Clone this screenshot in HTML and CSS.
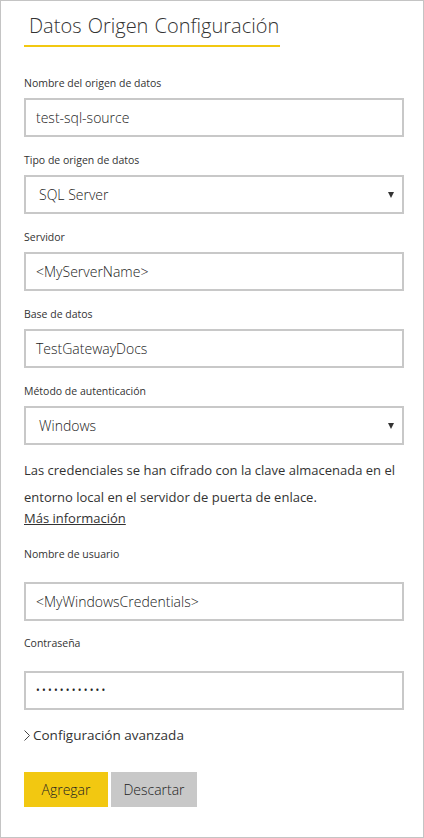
FILE: index.html
```html
<!DOCTYPE html>
<html lang="es">
<head>
<meta charset="utf-8">
<link rel="stylesheet" href="styles.css">
</head>
<body>
<div class="panel">
  <div class="header">
    <h1 class="title">Datos Origen Configuración</h1>
  </div>
  <form class="form">
    <div class="field">
      <label class="label">Nombre del origen de datos</label>
      <div class="box">test-sql-source</div>
    </div>
    <div class="field">
      <label class="label">Tipo de origen de datos</label>
      <div class="box select">SQL Server<span class="caret"></span></div>
    </div>
    <div class="field">
      <label class="label">Servidor</label>
      <div class="box">&lt;MyServerName&gt;</div>
    </div>
    <div class="field">
      <label class="label">Base de datos</label>
      <div class="box">TestGatewayDocs</div>
    </div>
    <div class="field">
      <label class="label">Método de autenticación</label>
      <div class="box select">Windows<span class="caret"></span></div>
    </div>
    <p class="note">Las credenciales se han cifrado con la clave almacenada en el entorno local en el servidor de puerta de enlace.</p>
    <a class="more">Más información</a>
    <div class="field field-wide">
      <label class="label">Nombre de usuario</label>
      <div class="box">&lt;MyWindowsCredentials&gt;</div>
    </div>
    <div class="field field-wide">
      <label class="label">Contraseña</label>
      <div class="box password">••••••••••••</div>
    </div>
    <div class="advanced">
      <svg class="chev" width="6" height="11" viewBox="0 0 6 11"><polyline points="0.5,0.5 5.5,5.5 0.5,10.5" fill="none" stroke="#444" stroke-width="1"/></svg>
      <span>Configuración avanzada</span>
    </div>
    <div class="actions">
      <button type="button" class="btn btn-primary">Agregar</button>
      <button type="button" class="btn btn-secondary">Descartar</button>
    </div>
  </form>
</div>
</body>
</html>
```

FILE: styles.css
```css
* { box-sizing: border-box; }
html, body { margin: 0; padding: 0; }
body {
  font-family: "Open Sans", "Noto Sans", sans-serif;
  color: #333;
  background: #fff;
}
.panel {
  width: 424px;
  height: 838px;
  border: 1px solid #c4c4c4;
  padding: 0 19px 0 23px;
}
.header {
  padding-top: 12px;
}
.title {
  display: inline-block;
  margin: 0;
  width: 256px;
  padding: 0 0 6px 5px;
  border-bottom: 2px solid #f2c811;
  font-size: 20px;
  font-weight: 300;
  line-height: 26px;
  word-spacing: 1px;
  white-space: nowrap;
  color: #333;
}
.form {
  display: flex;
  flex-direction: column;
  padding-top: 29px;
}
.field {
  display: flex;
  flex-direction: column;
  gap: 8px;
  margin-bottom: 16px;
}
.field-wide {
  gap: 21px;
  margin-bottom: 15px;
}
.label {
  font-size: 10.5px;
  line-height: 14px;
  color: #333;
}
.box {
  position: relative;
  height: 39px;
  width: 380px;
  border: 2px solid #c8c8c8;
  padding: 0 10px;
  font-size: 14px;
  font-weight: 300;
  line-height: 35px;
  color: #222;
}
.select { padding-left: 13px; }
.caret {
  position: absolute;
  right: 8px;
  top: 15px;
  width: 0;
  height: 0;
  border-left: 3.5px solid transparent;
  border-right: 3.5px solid transparent;
  border-top: 6px solid #333;
}
.password {
  font-size: 10px;
  font-weight: 400;
  letter-spacing: 2.2px;
}
.note {
  margin: -4px 0 0;
  font-size: 13px;
  line-height: 27px;
  color: #333;
}
.more {
  font-size: 13px;
  line-height: 14px;
  color: #333;
  text-decoration: underline;
  margin-bottom: 22px;
  align-self: flex-start;
}
.advanced {
  display: flex;
  align-items: center;
  gap: 3px;
  font-size: 13.5px;
  line-height: 20px;
  color: #333;
}
.chev { flex: none; }
.actions {
  display: flex;
  gap: 3px;
  margin-top: 27px;
}
.btn {
  height: 35px;
  border: none;
  font-family: inherit;
  font-size: 14px;
  font-weight: 300;
  color: #222;
  padding: 0;
}
.btn-primary { width: 84px; background: #f2c811; }
.btn-secondary { width: 86px; background: #c8c8c8; }
```
